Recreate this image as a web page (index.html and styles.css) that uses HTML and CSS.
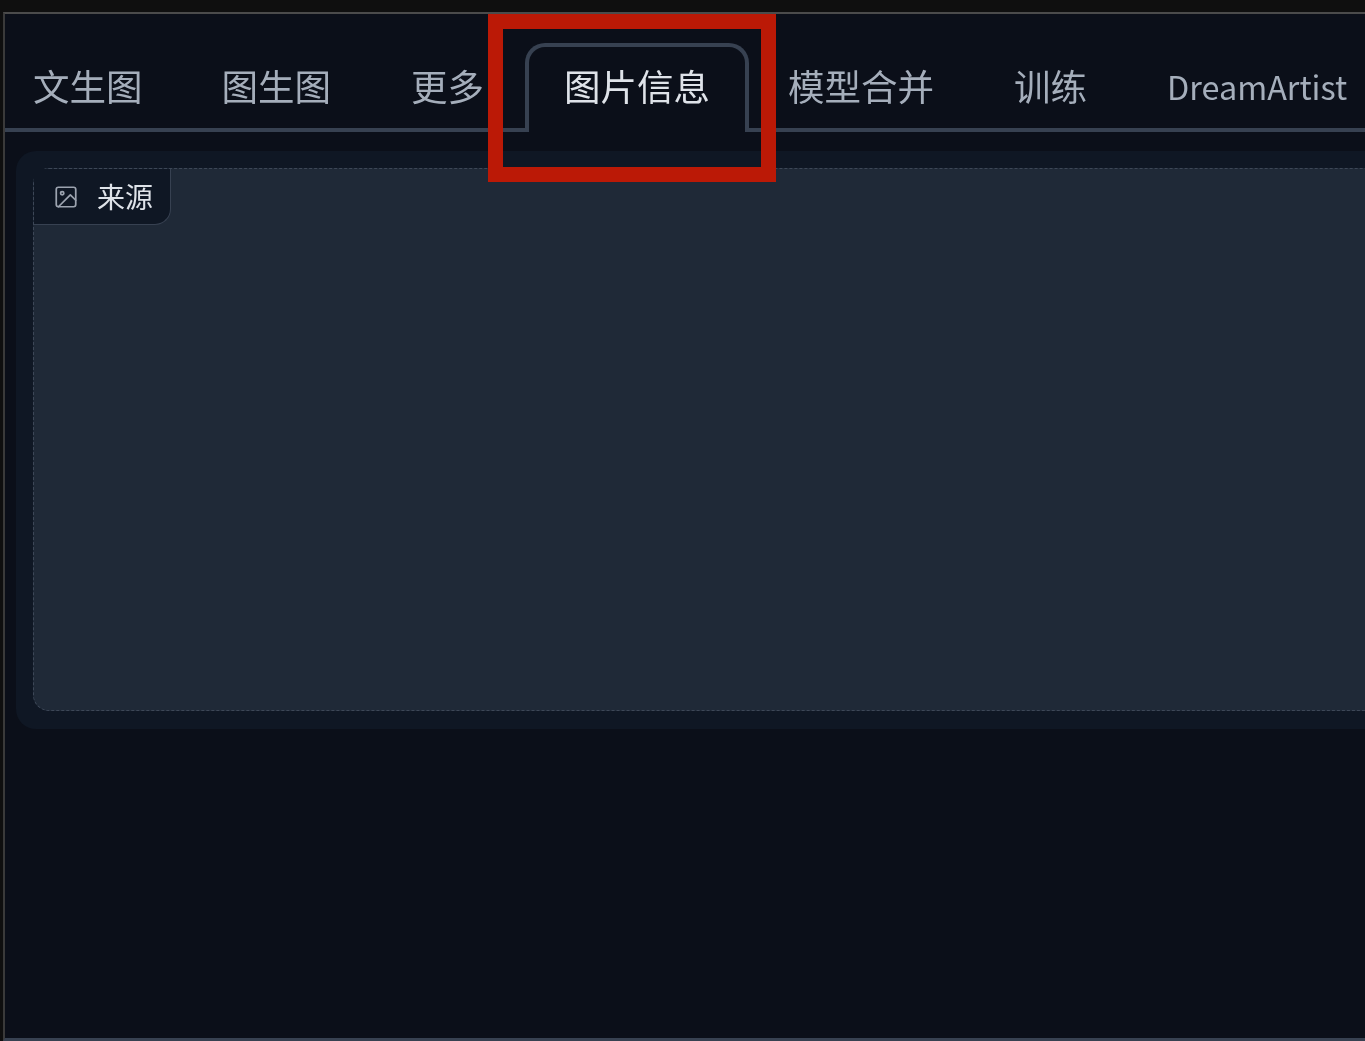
FILE: index.html
```html
<!DOCTYPE html>
<html lang="zh-CN">
<head>
    <meta charset="UTF-8">
    <title>图片信息</title>
    <link rel="stylesheet" href="styles.css">
</head>
<body>
    <div class="window">
        <div class="tabs">
            <button class="tab first">文生图</button>
            <button class="tab">图生图</button>
            <button class="tab short">更多</button>
            <button class="tab active">图片信息</button>
            <button class="tab">模型合并</button>
            <button class="tab short">训练</button>
            <button class="tab latin">DreamArtist</button>
        </div>
        <div class="panel">
            <div class="upload">
                <div class="label">
                    <svg class="label-icon" viewBox="0 0 24 24" fill="none" stroke="currentColor" stroke-width="1.6" stroke-linecap="round" stroke-linejoin="round">
                        <rect x="3" y="3" width="18" height="18" rx="2"></rect>
                        <circle cx="8.5" cy="8.5" r="1.5"></circle>
                        <polyline points="21 15 16 10 5 21"></polyline>
                    </svg>
                    <span class="label-text">来源</span>
                </div>
            </div>
        </div>
    </div>
    <div class="highlight"></div>
</body>
</html>
```

FILE: styles.css
```css
html, body {
    margin: 0;
    height: 100%;
    overflow: hidden;
}
body {
    background: #0f0f0f;
    padding-top: 12px;
    box-sizing: border-box;
    font-family: "Noto Sans CJK SC", "Noto Sans", sans-serif;
}
.window {
    height: 1029px;
    box-sizing: border-box;
    margin-left: 3px;
    background: #0b0f19;
    border-top: 2px solid #4b4b4b;
    border-left: 2px solid #3a3a3a;
    border-bottom: 3px solid #374151;
    overflow: hidden;
    filter: blur(0.4px);
}

/* tabs */
.tabs {
    display: flex;
    height: 118px;
    box-sizing: border-box;
    padding-top: 29px;
    border-bottom: 4px solid #374151;
}
.tab {
    height: 89px;
    flex-shrink: 0;
    box-sizing: border-box;
    padding: 0 35px 8px;
    background: none;
    border: 4px solid transparent;
    border-bottom: none;
    border-radius: 20px 20px 0 0;
    font-family: inherit;
    font-size: 36.5px;
    color: #a5aebb;
    white-space: nowrap;
}
.tab.first {
    padding-left: 24px;
    padding-right: 36px;
}
.tab.short {
    margin-left: 2px;
}
.tab.active {
    margin-left: 2px;
    background: #0b0f19;
    border-color: #374151;
    color: #dfe3e9;
}
.tab.latin {
    margin-left: 2px;
    font-size: 32.4px;
}

/* source panel */
.panel {
    margin: 19px -40px 0 11px;
    padding: 17px 17px 18px;
    background: #0f1724;
    border-radius: 20px;
}
.upload {
    position: relative;
    height: 543px;
    box-sizing: border-box;
    background: #1f2937;
    border: 1px dashed #3d4757;
    border-radius: 16px;
}
.label {
    position: absolute;
    top: 0;
    left: 0;
    width: 137px;
    height: 56px;
    box-sizing: border-box;
    display: flex;
    align-items: center;
    gap: 18px;
    padding-left: 19px;
    background: #0f1724;
    border-right: 1px solid #374151;
    border-bottom: 1px solid #374151;
    border-radius: 0 0 16px 0;
    font-size: 28px;
    color: #dfe3e9;
}
.label-text {
    margin-top: -2px;
}
.label-icon {
    width: 26px;
    height: 26px;
    flex-shrink: 0;
    color: #9ca3af;
}

/* red annotation box */
.highlight {
    position: absolute;
    left: 488px;
    top: 14px;
    width: 288px;
    height: 168px;
    box-sizing: border-box;
    border: 15px solid #bb1906;
}
```
